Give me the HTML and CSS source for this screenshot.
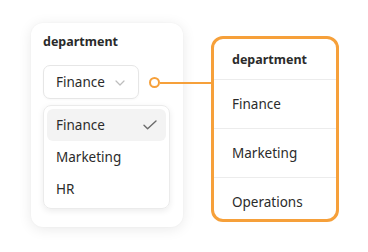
FILE: index.html
```html
<!DOCTYPE html>
<html>
<head>
<meta charset="utf-8">
<link rel="stylesheet" href="styles.css">
</head>
<body>
<div class="stage">
  <div class="card">
    <div class="label">department</div>
    <div class="select-row">
      <div class="select">
        <span>Finance</span>
        <svg class="chev" width="10" height="6" viewBox="0 0 10 6"><path d="M1 1l4 4 4-4" fill="none" stroke="#bdbdbd" stroke-width="1.2" stroke-linecap="round" stroke-linejoin="round"/></svg>
      </div>
      <div class="connector"><span class="dot"></span><span class="line"></span></div>
    </div>
    <div class="menu">
      <div class="item active"><span>Finance</span>
        <svg width="14" height="10" viewBox="0 0 14 10"><path d="M1 5.2l3.6 3.6L13 1" fill="none" stroke="#6b6b6b" stroke-width="1.4" stroke-linecap="round" stroke-linejoin="round"/></svg>
      </div>
      <div class="item"><span>Marketing</span></div>
      <div class="item"><span>HR</span></div>
    </div>
  </div>
  <div class="table">
    <div class="row head">department</div>
    <div class="row">Finance</div>
    <div class="row">Marketing</div>
    <div class="row">Operations</div>
  </div>
</div>
</body>
</html>
```
FILE: styles.css
```css
html, body { margin: 0; padding: 0; background: #fff; }
body { font-family: "Noto Sans", "Open Sans", sans-serif; color: #2b2b2b; width: 368px; height: 252px; overflow: hidden; }
.stage { display: flex; align-items: flex-start; padding: 23px 0 0 31px; gap: 28px; }
.card {
  width: 152px; height: 204px; box-sizing: border-box;
  background: #fff; border-radius: 12px;
  box-shadow: 0 2px 14px rgba(0,0,0,0.09), 0 0 2px rgba(0,0,0,0.04);
  padding: 9px 12px 0 12px;
}
.label { font-weight: 700; font-size: 12.5px; line-height: 20px; color: #2a2a2a; }
.select-row { position: relative; margin-top: 13px; height: 34px; }
.select {
  width: 96px; height: 34px; box-sizing: border-box;
  border: 1px solid #e6e6e6; border-radius: 7px;
  display: flex; align-items: center; padding-left: 12px;
  font-size: 13.5px; gap: 10px;
  box-shadow: 0 1px 2px rgba(0,0,0,0.03);
}
.chev { margin-top: 1px; }
.connector { position: absolute; left: 106px; top: 12px; display: flex; align-items: center; }
.dot { width: 7px; height: 7px; border: 2px solid #f6a03a; border-radius: 50%; background: #fff; }
.line { width: 52px; height: 2px; background: #f6a03a; }
.menu {
  margin-top: 6px; width: 127px; box-sizing: border-box;
  border: 1px solid #ebebeb; border-radius: 8px; padding: 3px;
  box-shadow: 0 2px 6px rgba(0,0,0,0.08);
}
.item { height: 32px; display: flex; align-items: center; justify-content: space-between; padding: 0 9px; border-radius: 6px; font-size: 13.5px; }
.item.active { background: #f3f3f3; }
.table {
  margin-top: 13px; width: 128px; height: 186px; box-sizing: border-box;
  border: 3px solid #f6a03a; border-radius: 12px; overflow: hidden;
}
.row { height: 48px; border-bottom: 1px solid #ececec; display: flex; align-items: center; padding-left: 18px; font-size: 13.5px; }
.row.head { height: 40px; font-weight: 700; font-size: 12.5px; }
.row:last-child { border-bottom: none; }
```
